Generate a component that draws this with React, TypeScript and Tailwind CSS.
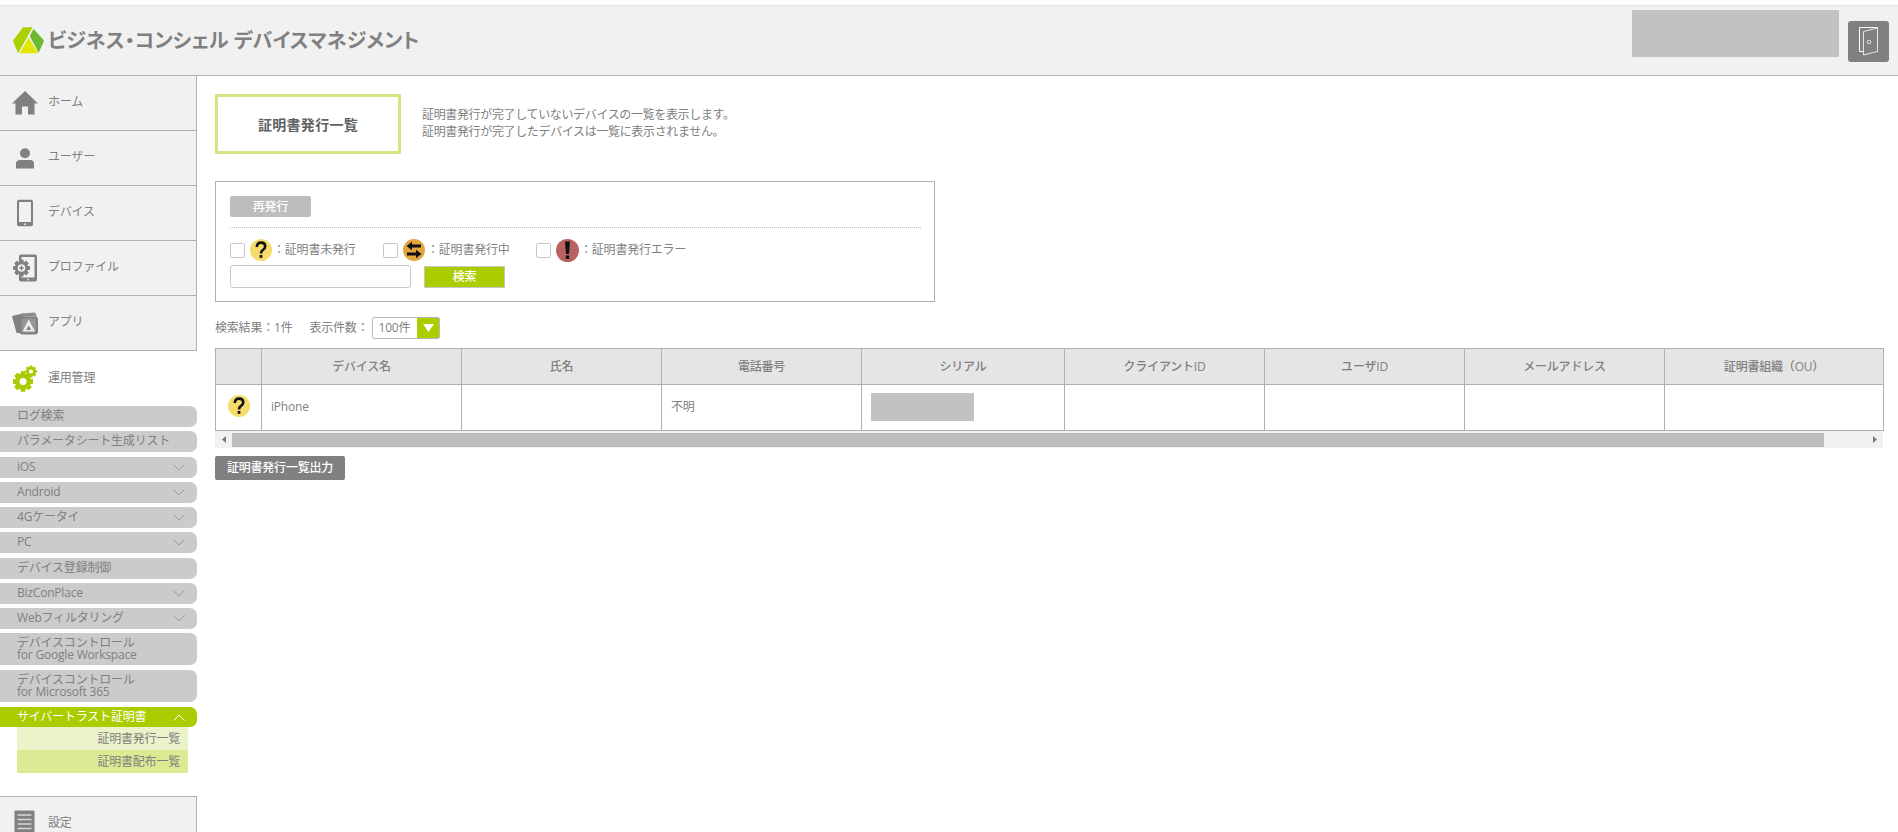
const FONT = "font-['Open_Sans','Noto_Sans_CJK_JP',sans-serif] tracking-[-0.2px]";

function Home() {
  return <svg width="28" height="24" viewBox="0 0 28 24"><path d="M14 0 L27 12.5 L23.5 12.5 L23.5 23.5 L17 23.5 L17 15.5 L11 15.5 L11 23.5 L4.5 23.5 L4.5 12.5 L1 12.5 Z" fill="#808080" /></svg>;
}
function UserIcon() {
  return <svg width="20" height="21" viewBox="0 0 20 21"><circle cx="10" cy="5.2" r="5" fill="#808080" /><path d="M1 20.5 V15.5 Q1 12 5 12 H15 Q19 12 19 15.5 V20.5 Z" fill="#808080" /></svg>;
}
function Phone() {
  return <svg width="18" height="28" viewBox="0 0 18 28"><rect x="1" y="0.8" width="16" height="26.4" rx="2" fill="#808080" /><rect x="3" y="3" width="12" height="20" fill="#f1f1f1" /><circle cx="9" cy="25.2" r="0.9" fill="#f1f1f1" /></svg>;
}
function GearPath({ cx, cy, r, color, hole, holeColor }: { cx: number; cy: number; r: number; color: string; hole: number; holeColor: string }) {
  const teeth = [0, 45, 90, 135, 180, 225, 270, 315];
  return (
    <g>
      {teeth.map((a) => (
        <rect key={a} x={cx - r * 0.28} y={cy - r * 1.25} width={r * 0.56} height={r * 2.5} fill={color} transform={`rotate(${a} ${cx} ${cy})`} />
      ))}
      <circle cx={cx} cy={cy} r={r} fill={color} />
      <circle cx={cx} cy={cy} r={hole} fill={holeColor} />
    </g>
  );
}
function Profile() {
  return (
    <svg width="26" height="28" viewBox="0 0 26 28">
      <rect x="7" y="0.5" width="18" height="27" rx="2" fill="#808080" />
      <rect x="9.5" y="3" width="13" height="20.5" fill="#f1f1f1" />
      <circle cx="16" cy="25.6" r="0.9" fill="#f1f1f1" />
      <GearPath cx={9.5} cy={14} r={6.6} color="#808080" hole={3.8} holeColor="#f1f1f1" />
      <path d="M9.5 11.8 V16.2 M7.3 14 H11.7" stroke="#808080" strokeWidth="1.4" />
    </svg>
  );
}
function AppIcon() {
  return (
    <svg width="28" height="24" viewBox="0 0 28 24">
      <path d="M1 5 L12 2.5 L14 6 L9 7 L9 22 L5.5 22 Q3 13 1 5 Z" fill="#808080" />
      <path d="M10 2.5 L24 1.5 L26 5.5 L11 5.5 Z" fill="#8c8c8c" />
      <rect x="8.5" y="5.5" width="18.5" height="18" rx="3" fill="#808080" />
      <rect x="10.5" y="7.5" width="14.5" height="14" rx="2" fill="#969696" />
      <path d="M17.7 8.5 L24 20.5 L11.5 20.5 Z" fill="#eeeeee" />
      <path d="M17.7 14.5 L20.2 19 L15.2 19 Z" fill="#808080" />
    </svg>
  );
}
function Gears() {
  return (
    <svg width="26" height="28" viewBox="0 0 26 28">
      <GearPath cx={11} cy={16.5} r={8} color="#a9cc00" hole={3.5} holeColor="#ffffff" />
      <GearPath cx={19} cy={6.5} r={4.6} color="#a9cc00" hole={2.1} holeColor="#ffffff" />
    </svg>
  );
}
function DocIcon() {
  return (
    <svg width="21" height="26" viewBox="0 0 21 26">
      <rect x="0.5" y="0.5" width="20" height="25" rx="1" fill="#808080" />
      <path d="M3.5 5 H17.5 M3.5 9.5 H17.5 M3.5 14 H17.5 M3.5 18.5 H17.5 M3.5 23 H17.5" stroke="#d8d8d8" strokeWidth="1.5" />
    </svg>
  );
}
function Chevron({ up }: { up?: boolean }) {
  return (
    <svg width="12" height="7" viewBox="0 0 12 7" fill="none">
      <path d={up ? "M0.5 6.5 L6 1 L11.5 6.5" : "M0.5 0.5 L6 6 L11.5 0.5"} stroke={up ? "#ffffff" : "#9a9a9a"} strokeWidth="1" />
    </svg>
  );
}
function QuestionIcon() {
  return (
    <svg width="22" height="22" viewBox="0 0 22 22" className="shrink-0">
      <circle cx="11" cy="11" r="11" fill="#f5dc6b" />
      <path d="M6.8 8 Q7 3.6 11 3.6 Q15.2 3.6 15.2 7.4 Q15.2 9.6 13 10.8 Q11 12 11 14.4" stroke="#111" strokeWidth="2.6" fill="none" />
      <rect x="9.6" y="16" width="2.8" height="2.8" fill="#111" />
    </svg>
  );
}
function SwapIcon() {
  return (
    <svg width="22" height="22" viewBox="0 0 22 22" className="shrink-0">
      <circle cx="11" cy="11" r="11" fill="#e3a63f" />
      <path d="M3.5 7 L9 2.8 V5.6 H18 V8.4 H9 V11.2 Z" fill="#111" />
      <path d="M18.5 15 L13 10.8 V13.6 H4 V16.4 H13 V19.2 Z" fill="#111" />
    </svg>
  );
}
function AlertIcon() {
  return (
    <svg width="23" height="23" viewBox="0 0 23 23" className="shrink-0">
      <circle cx="11.5" cy="11.5" r="11.5" fill="#b96262" />
      <path d="M9 2.5 H14 L13 15 H10 Z" fill="#111" />
      <rect x="9.8" y="16.5" width="3.4" height="3.4" fill="#111" />
    </svg>
  );
}
function DoorIcon() {
  return (
    <svg width="20" height="29" viewBox="0 0 20 29" fill="none">
      <path d="M0.5 0.5 H18.5 V24.5 H4.5" stroke="#ffffff" strokeWidth="1" />
      <path d="M0.5 0.5 V24.5 H4.5" stroke="#ffffff" strokeWidth="1" />
      <path d="M4.5 4.5 L18.5 1 V24.5 L4.5 28 Z" stroke="#e4e4e4" strokeWidth="1" fill="#808080" />
      <circle cx="10" cy="15" r="1.8" stroke="#e4e4e4" strokeWidth="1" />
    </svg>
  );
}
function Logo() {
  return (
    <svg width="31" height="27" viewBox="0 0 31 27">
      <path d="M10 0.2 L19.6 0.2 L5.6 25.6 Q5 26 4.6 25 L0.4 15 Q0 14 0.5 13 Z" fill="#a9d000" />
      <path d="M20.6 2 L30.6 13 Q31 14 30.6 15 L26 25 Q25.6 26 25.2 25 L16.8 9 Z" fill="#6cb82e" />
      <path d="M15.7 10.5 L25 26.2 L6.7 26.2 Z" fill="#e3e600" />
    </svg>
  );
}

const mainNav = [
  { label: "ホーム", icon: <Home /> },
  { label: "ユーザー", icon: <UserIcon /> },
  { label: "デバイス", icon: <Phone /> },
  { label: "プロファイル", icon: <Profile /> },
  { label: "アプリ", icon: <AppIcon /> },
];

const sub = [
  { label: "ログ検索" },
  { label: "パラメータシート生成リスト" },
  { label: "iOS", chev: true },
  { label: "Android", chev: true },
  { label: "4Gケータイ", chev: true },
  { label: "PC", chev: true },
  { label: "デバイス登録制御" },
  { label: "BizConPlace", chev: true },
  { label: "Webフィルタリング", chev: true },
];

const columns = [
  { t: "", w: "w-[46px]" },
  { t: "デバイス名", w: "w-[200px]" },
  { t: "氏名", w: "w-[200px]" },
  { t: "電話番号", w: "w-[200px]" },
  { t: "シリアル", w: "w-[203px]" },
  { t: "クライアントID", w: "w-[200px]" },
  { t: "ユーザID", w: "w-[200px]" },
  { t: "メールアドレス", w: "w-[200px]" },
  { t: "証明書組織（OU）", w: "w-[219px]" },
];

function Check() {
  return <span className="block w-[15px] h-[15px] shrink-0 border border-[#c8c8c8] rounded-[2px] bg-white" />;
}

export default function App() {
  return (
    <div className={`h-screen overflow-hidden bg-white text-[12px] text-[#808080] ${FONT}`}>
      <header className="mt-[5px] h-[71px] flex items-center bg-[#f1f1f1] border-t border-b border-t-[#e2e2e2] border-b-[#b0b0b0] pl-[13px] pr-[9px]">
        <Logo />
        <span className="ml-[4px] text-[20px] font-bold leading-none tracking-[0.05px] text-[#808080] whitespace-pre [font-feature-settings:'palt']">ビジネス・コンシェル デバイスマネジメント</span>
        <div className="ml-auto w-[207px] h-[47px] self-start mt-[4px] bg-[#c2c2c2]" />
        <div className="ml-[9px] w-[41px] h-[41px] self-start mt-[15px] rounded-[3px] bg-[#808080] flex items-center justify-center">
          <DoorIcon />
        </div>
      </header>
      <div className="flex">
        <aside className="w-[197px] shrink-0">
          {mainNav.map((n) => (
            <div key={n.label} className="h-[55px] flex items-center bg-[#f1f1f1] border-r border-b border-[#b0b0b0]">
              <div className="w-[48px] flex justify-center shrink-0 pl-[2px]">{n.icon}</div>
              <span className="-mt-[2px]">{n.label}</span>
            </div>
          ))}
          <div className="h-[55px] flex items-center">
            <div className="w-[48px] flex justify-center shrink-0 pl-[2px]"><Gears /></div>
            <span className="-mt-[2px]">運用管理</span>
          </div>
          <div className="flex flex-col">
            {sub.map((s) => (
              <div key={s.label} className="h-[21px] mb-[4.27px] flex items-center justify-between pl-[17px] pr-[12px] bg-[#cbcbcb] rounded-r-[7px] rounded-l-none leading-none">
                <span className="-mt-[1px]">{s.label}</span>
                {s.chev && <Chevron />}
              </div>
            ))}
            <div className="h-[32px] mb-[5px] flex flex-col justify-center pl-[17px] bg-[#cbcbcb] rounded-r-[7px]">
              <p className="h-[12px] leading-[12px] -mt-[1px]">デバイスコントロール</p>
              <p className="h-[12px] leading-[12px]">for Google Workspace</p>
            </div>
            <div className="h-[32px] mb-[5px] flex flex-col justify-center pl-[17px] bg-[#cbcbcb] rounded-r-[7px]">
              <p className="h-[12px] leading-[12px] -mt-[1px]">デバイスコントロール</p>
              <p className="h-[12px] leading-[12px]">for Microsoft 365</p>
            </div>
            <div className="h-[20px] flex items-center justify-between pl-[17px] pr-[12px] bg-[#aacd00] rounded-r-[7px] text-white">
              <span>サイバートラスト証明書</span>
              <Chevron up />
            </div>
            <div className="ml-[17px] w-[171px] h-[23px] flex items-center justify-end pr-[8px] bg-[#eaf3c9]">証明書発行一覧</div>
            <div className="ml-[17px] w-[171px] h-[23px] flex items-center justify-end pr-[8px] bg-[#dcea94]">証明書配布一覧</div>
          </div>
          <div className="mt-[23px] h-[55px] flex items-start bg-[#f1f1f1] border-t border-r border-[#b0b0b0]">
            <div className="w-[48px] flex justify-center shrink-0 pt-[13px]"><DocIcon /></div>
            <span className="pt-[17px] leading-[18px]">設定</span>
          </div>
        </aside>
        <main className="flex-1 min-w-0 pl-[18px] pr-[14px] pt-[18px]">
          <div className="flex items-start">
            <div className="w-[186px] h-[60px] border-[3px] border-[#d6e481] flex items-center justify-center pt-[1px] text-[14px] tracking-[0.3px] font-bold text-[#606060]">証明書発行一覧</div>
            <div className="ml-[21px] mt-[12px] leading-[17px] tracking-[-0.35px] text-[#808080]">
              <p>証明書発行が完了していないデバイスの一覧を表示します。</p>
              <p>証明書発行が完了したデバイスは一覧に表示されません。</p>
            </div>
          </div>
          <section className="mt-[27px] w-[720px] h-[121px] border border-[#b0b0b0] px-[14px] pt-[14px]">
            <button className="w-[81px] h-[21px] bg-[#bdbdbd] rounded-[2px] text-white text-[12px] font-medium leading-none">再発行</button>
            <div className="mt-[10px] border-t border-dotted border-[#c0c0c0] w-[691px]" />
            <div className="mt-[11px] flex items-center h-[22px]">
              <Check />
              <span className="ml-[5px]"><QuestionIcon /></span>
              <span className="ml-[1px] w-[110px]">：証明書未発行</span>
              <Check />
              <span className="ml-[5px]"><SwapIcon /></span>
              <span className="ml-[2px] w-[109px]">：証明書発行中</span>
              <Check />
              <span className="ml-[5px]"><AlertIcon /></span>
              <span className="ml-[1px]">：証明書発行エラー</span>
            </div>
            <div className="mt-[4px] flex items-center">
              <div className="w-[181px] h-[23px] border border-[#c8c8c8] rounded-[3px] bg-white" />
              <button className="ml-[13px] w-[81px] h-[22px] bg-[#aacd00] border border-[#c8c8c8] text-white text-[12px] font-medium leading-none">検索</button>
            </div>
          </section>
          <div className="mt-[15px] flex items-center h-[22px]">
            <span>検索結果：1件</span>
            <span className="ml-[17px]">表示件数：</span>
            <div className="ml-[4px] w-[68px] h-[22px] border border-[#b8b8b8] rounded-[2px] flex overflow-hidden">
              <span className="flex-1 flex items-center pl-[5px]">100件</span>
              <span className="w-[22px] bg-[#aacd00] flex items-center justify-center">
                <svg width="11" height="8" viewBox="0 0 11 8"><path d="M0 0 H11 L5.5 8 Z" fill="#ffffff" /></svg>
              </span>
            </div>
          </div>
          <table className="mt-[9px] w-[1668px] table-fixed border-collapse">
            <thead>
              <tr className="h-[36px] bg-[#e5e5e5]">
                {columns.map((c, i) => (
                  <th key={i} className={`${c.w} border border-[#b0b0b0] font-medium text-[12px] text-[#808080] text-center p-0`}>{c.t}</th>
                ))}
              </tr>
            </thead>
            <tbody>
              <tr className="h-[46px]">
                <td className="border border-[#b0b0b0] p-0"><div className="flex justify-center -mt-[3px]"><QuestionIcon /></div></td>
                <td className="border border-[#b0b0b0] pl-[9px] pb-[2px]">iPhone</td>
                <td className="border border-[#b0b0b0]" />
                <td className="border border-[#b0b0b0] pl-[9px] pb-[2px]">不明</td>
                <td className="border border-[#b0b0b0] pl-[9px]"><div className="w-[103px] h-[28px] -mt-[2px] bg-[#c2c2c2]" /></td>
                <td className="border border-[#b0b0b0]" />
                <td className="border border-[#b0b0b0]" />
                <td className="border border-[#b0b0b0]" />
                <td className="border border-[#b0b0b0]" />
              </tr>
            </tbody>
          </table>
          <div className="w-[1668px] h-[17px] flex items-center bg-[#f1f1f1]">
            <span className="w-[17px] flex justify-center shrink-0"><svg width="4" height="7" viewBox="0 0 4 7"><path d="M4 0 V7 L0 3.5 Z" fill="#7a7a7a" /></svg></span>
            <span className="w-[1592px] h-[14px] bg-[#bdbdbd]" />
            <span className="flex-1 flex justify-end pr-[6px]"><svg width="4" height="7" viewBox="0 0 4 7"><path d="M0 0 V7 L4 3.5 Z" fill="#7a7a7a" /></svg></span>
          </div>
          <button className="mt-[8px] w-[130px] h-[24px] bg-[#808080] rounded-[2px] text-white text-[12px] font-medium leading-none">証明書発行一覧出力</button>
        </main>
      </div>
    </div>
  );
}
